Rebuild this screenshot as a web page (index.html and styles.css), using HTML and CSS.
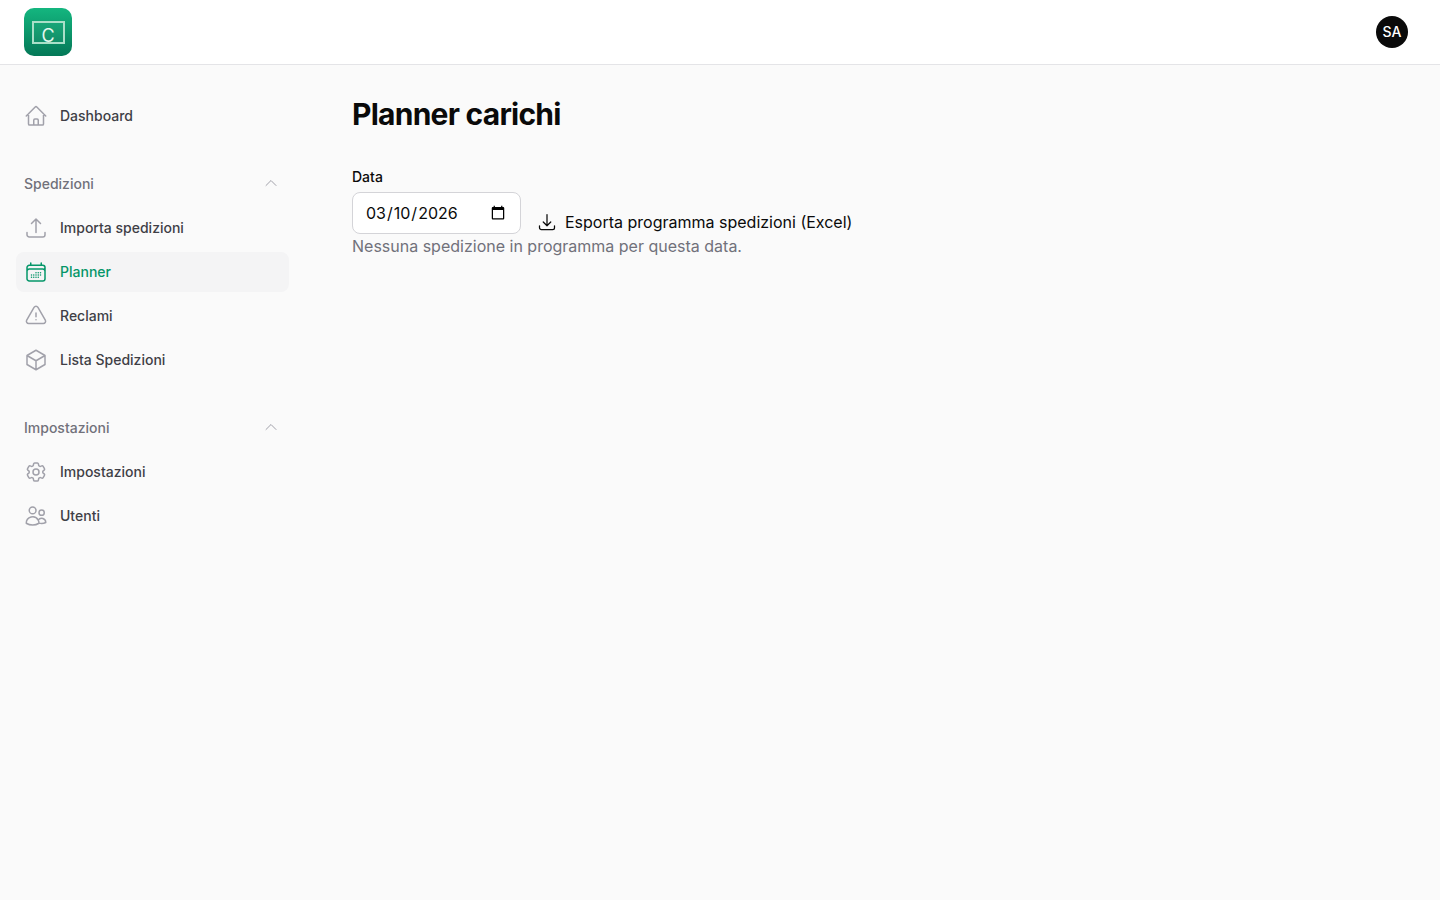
FILE: index.html
```html
<!DOCTYPE html>
<html lang="en">
<head>
    <meta charset="UTF-8">
    <meta name="viewport" content="width=device-width, initial-scale=1.0">
    <title>Planner carichi</title>
    <link rel="stylesheet" href="styles.css">
</head>
<body>
    <!-- Top bar -->
    <header class="topbar">
        <div class="logo">
            <div class="logo-screen">C</div>
        </div>
        <div class="avatar">SA</div>
    </header>

    <div class="layout">
        <!-- Sidebar -->
        <nav class="sidebar">
            <a class="nav-item">
                <svg class="nav-icon" viewBox="0 0 24 24"><path d="m2.25 12 8.954-8.955c.44-.439 1.152-.439 1.591 0L21.75 12M4.5 9.75v10.125c0 .621.504 1.125 1.125 1.125H9.75v-4.875c0-.621.504-1.125 1.125-1.125h2.25c.621 0 1.125.504 1.125 1.125V21h4.125c.621 0 1.125-.504 1.125-1.125V9.75M8.25 21h8.25"/></svg>
                Dashboard
            </a>

            <div class="nav-group">
                <div class="nav-label">
                    Spedizioni
                    <svg class="chevron" viewBox="0 0 24 24"><path d="m4.5 15.75 7.5-7.5 7.5 7.5"/></svg>
                </div>
                <a class="nav-item">
                    <svg class="nav-icon" viewBox="0 0 24 24"><path d="M3 16.5v2.25A2.25 2.25 0 0 0 5.25 21h13.5A2.25 2.25 0 0 0 21 18.75V16.5m-13.5-9L12 3m0 0 4.5 4.5M12 3v13.5"/></svg>
                    Importa spedizioni
                </a>
                <a class="nav-item active">
                    <svg class="nav-icon" viewBox="0 0 24 24"><path d="M6.75 3v2.25M17.25 3v2.25M3 18.75V7.5a2.25 2.25 0 0 1 2.25-2.25h13.5A2.25 2.25 0 0 1 21 7.5v11.25m-18 0A2.25 2.25 0 0 0 5.25 21h13.5A2.25 2.25 0 0 0 21 18.75m-18 0v-7.5A2.25 2.25 0 0 1 5.25 9h13.5A2.25 2.25 0 0 1 21 11.25v7.5m-9-6h.008v.008H12v-.008ZM12 15h.008v.008H12V15Zm0 2.25h.008v.008H12v-.008ZM9.75 15h.008v.008H9.75V15Zm0 2.25h.008v.008H9.75v-.008ZM7.5 15h.008v.008H7.5V15Zm0 2.25h.008v.008H7.5v-.008Zm6.75-4.5h.008v.008h-.008v-.008Zm0 2.25h.008v.008h-.008V15Zm0 2.25h.008v.008h-.008v-.008Zm2.25-4.5h.008v.008H16.5v-.008Zm0 2.25h.008v.008H16.5V15Z"/></svg>
                    Planner
                </a>
                <a class="nav-item">
                    <svg class="nav-icon" viewBox="0 0 24 24"><path d="M12 9v3.75m-9.303 3.376c-.866 1.5.217 3.374 1.948 3.374h14.71c1.73 0 2.813-1.874 1.948-3.374L13.949 3.378c-.866-1.5-3.032-1.5-3.898 0L2.697 16.126ZM12 15.75h.007v.008H12v-.008Z"/></svg>
                    Reclami
                </a>
                <a class="nav-item">
                    <svg class="nav-icon" viewBox="0 0 24 24"><path d="m21 7.5-9-5.25L3 7.5m18 0-9 5.25m9-5.25v9l-9 5.25M3 7.5l9 5.25M3 7.5v9l9 5.25m0-9v9"/></svg>
                    Lista Spedizioni
                </a>
            </div>

            <div class="nav-group">
                <div class="nav-label">
                    Impostazioni
                    <svg class="chevron" viewBox="0 0 24 24"><path d="m4.5 15.75 7.5-7.5 7.5 7.5"/></svg>
                </div>
                <a class="nav-item">
                    <svg class="nav-icon" viewBox="0 0 24 24"><path d="M9.594 3.94c.09-.542.56-.94 1.11-.94h2.593c.55 0 1.02.398 1.11.94l.213 1.281c.063.374.313.686.645.87.074.04.147.083.22.127.325.196.72.257 1.075.124l1.217-.456a1.125 1.125 0 0 1 1.37.49l1.296 2.247a1.125 1.125 0 0 1-.26 1.431l-1.003.827c-.293.241-.438.613-.43.992a7.723 7.723 0 0 1 0 .255c-.008.378.137.75.43.991l1.004.827c.424.35.534.955.26 1.43l-1.298 2.247a1.125 1.125 0 0 1-1.369.491l-1.217-.456c-.355-.133-.75-.072-1.076.124a6.47 6.47 0 0 1-.22.128c-.331.183-.581.495-.644.869l-.213 1.281c-.09.543-.56.94-1.11.94h-2.594c-.55 0-1.019-.398-1.11-.94l-.213-1.281c-.062-.374-.312-.686-.644-.87a6.52 6.52 0 0 1-.22-.127c-.325-.196-.72-.257-1.076-.124l-1.217.456a1.125 1.125 0 0 1-1.369-.49l-1.297-2.247a1.125 1.125 0 0 1 .26-1.431l1.004-.827c.292-.24.437-.613.43-.991a6.932 6.932 0 0 1 0-.255c.007-.38-.138-.751-.43-.992l-1.004-.827a1.125 1.125 0 0 1-.26-1.43l1.297-2.247a1.125 1.125 0 0 1 1.37-.491l1.216.456c.356.133.751.072 1.076-.124.072-.044.146-.086.22-.128.332-.183.582-.495.644-.869l.214-1.28Z"/><path d="M15 12a3 3 0 1 1-6 0 3 3 0 0 1 6 0Z"/></svg>
                    Impostazioni
                </a>
                <a class="nav-item">
                    <svg class="nav-icon" viewBox="0 0 24 24"><path d="M15 19.128a9.38 9.38 0 0 0 2.625.372 9.337 9.337 0 0 0 4.121-.952 4.125 4.125 0 0 0-7.533-2.493M15 19.128v-.003c0-1.113-.285-2.16-.786-3.07M15 19.128v.106A12.318 12.318 0 0 1 8.624 21c-2.331 0-4.512-.645-6.374-1.766l-.001-.109a6.375 6.375 0 0 1 11.964-3.07M12 6.375a3.375 3.375 0 1 1-6.75 0 3.375 3.375 0 0 1 6.75 0Zm8.25 2.25a2.625 2.625 0 1 1-5.25 0 2.625 2.625 0 0 1 5.25 0Z"/></svg>
                    Utenti
                </a>
            </div>
        </nav>

        <!-- Main content -->
        <main class="content">
            <h1 class="page-title">Planner carichi</h1>
            <label class="field-label" for="date">Data</label>
            <div class="toolbar">
                <input class="date-input" id="date" type="date" value="2026-03-10">
                <a class="export-link">
                    <svg class="export-icon" viewBox="0 0 24 24"><path d="M3 16.5v2.25A2.25 2.25 0 0 0 5.25 21h13.5A2.25 2.25 0 0 0 21 18.75V16.5M16.5 12 12 16.5m0 0L7.5 12m4.5 4.5V3"/></svg>
                    Esporta programma spedizioni (Excel)
                </a>
            </div>
            <p class="empty-text">Nessuna spedizione in programma per questa data.</p>
        </main>
    </div>
</body>
</html>
```

FILE: styles.css
```css
html, body {
    margin: 0;
    padding: 0;
    height: 100%;
    overflow: hidden;
    background: #fafafa;
    color: #0a0a0a;
    font-family: Inter, "Liberation Sans", sans-serif;
}
svg {
    fill: none;
    stroke: currentColor;
    stroke-width: 1.5;
    stroke-linecap: round;
    stroke-linejoin: round;
}
.topbar {
    display: flex;
    justify-content: space-between;
    align-items: center;
    height: 64px;
    padding: 0 32px 0 24px;
    background: #fff;
    border-bottom: 1px solid #e4e4e7;
}
.logo {
    display: flex;
    justify-content: center;
    align-items: center;
    width: 48px;
    height: 48px;
    border-radius: 10px;
    background: linear-gradient(180deg, #14b67f, #047857);
}
.logo-screen {
    width: 29px;
    height: 19px;
    margin-top: 1px;
    border: 2px solid #a9dfc8;
    text-align: center;
    color: #e4f7ee;
    font-size: 18px;
    line-height: 26px;
    background: rgba(255, 255, 255, 0.04);
}
.avatar {
    width: 32px;
    height: 32px;
    border-radius: 50%;
    background: #0a0a0a;
    color: #fff;
    font-size: 14px;
    font-weight: 500;
    line-height: 32px;
    text-align: center;
}
.layout {
    display: flex;
}
.sidebar {
    display: flex;
    flex-direction: column;
    gap: 28px;
    box-sizing: border-box;
    width: 289px;
    padding: 31px 0 0 16px;
    flex-shrink: 0;
}
.nav-group {
    display: flex;
    flex-direction: column;
    gap: 4px;
}
.nav-item {
    display: flex;
    align-items: center;
    gap: 12px;
    height: 40px;
    padding: 0 8px;
    border-radius: 8px;
    color: #3f3f46;
    font-size: 14px;
    line-height: 20px;
    font-weight: 450;
}
.nav-icon {
    width: 24px;
    height: 24px;
    color: #a1a1aa;
    flex-shrink: 0;
}
.nav-item.active {
    background: #f4f4f5;
    color: #059669;
}
.nav-item.active .nav-icon {
    color: #059669;
}
.nav-label {
    display: flex;
    justify-content: space-between;
    align-items: center;
    height: 40px;
    padding: 0 10px 0 8px;
    color: #71717a;
    font-size: 14px;
    line-height: 20px;
    font-weight: 450;
}
.chevron {
    width: 16px;
    height: 16px;
    margin-bottom: 2px;
    color: #a1a1aa;
}
.content {
    flex: 1;
    padding: 30px 32px 0 63px;
}
.page-title {
    margin: 0 0 34px;
    font-size: 30px;
    line-height: 38px;
    font-weight: 700;
    letter-spacing: -0.75px;
}
.field-label {
    display: block;
    margin-bottom: 5px;
    font-size: 14px;
    line-height: 20px;
    font-weight: 450;
}
.toolbar {
    display: flex;
    align-items: flex-end;
    gap: 16px;
}
.date-input {
    box-sizing: border-box;
    width: 169px;
    height: 42px;
    padding: 0 12px;
    background: #fff;
    border: 1px solid #d4d4d8;
    border-radius: 8px;
    color: #0a0a0a;
    font-family: inherit;
    font-size: 16px;
}
.export-link {
    display: flex;
    align-items: center;
    gap: 8px;
    font-size: 16px;
    line-height: 24px;
}
.export-icon {
    width: 20px;
    height: 20px;
}
.empty-text {
    margin: 0;
    color: #71717a;
    font-size: 16px;
    line-height: 24px;
}
```
